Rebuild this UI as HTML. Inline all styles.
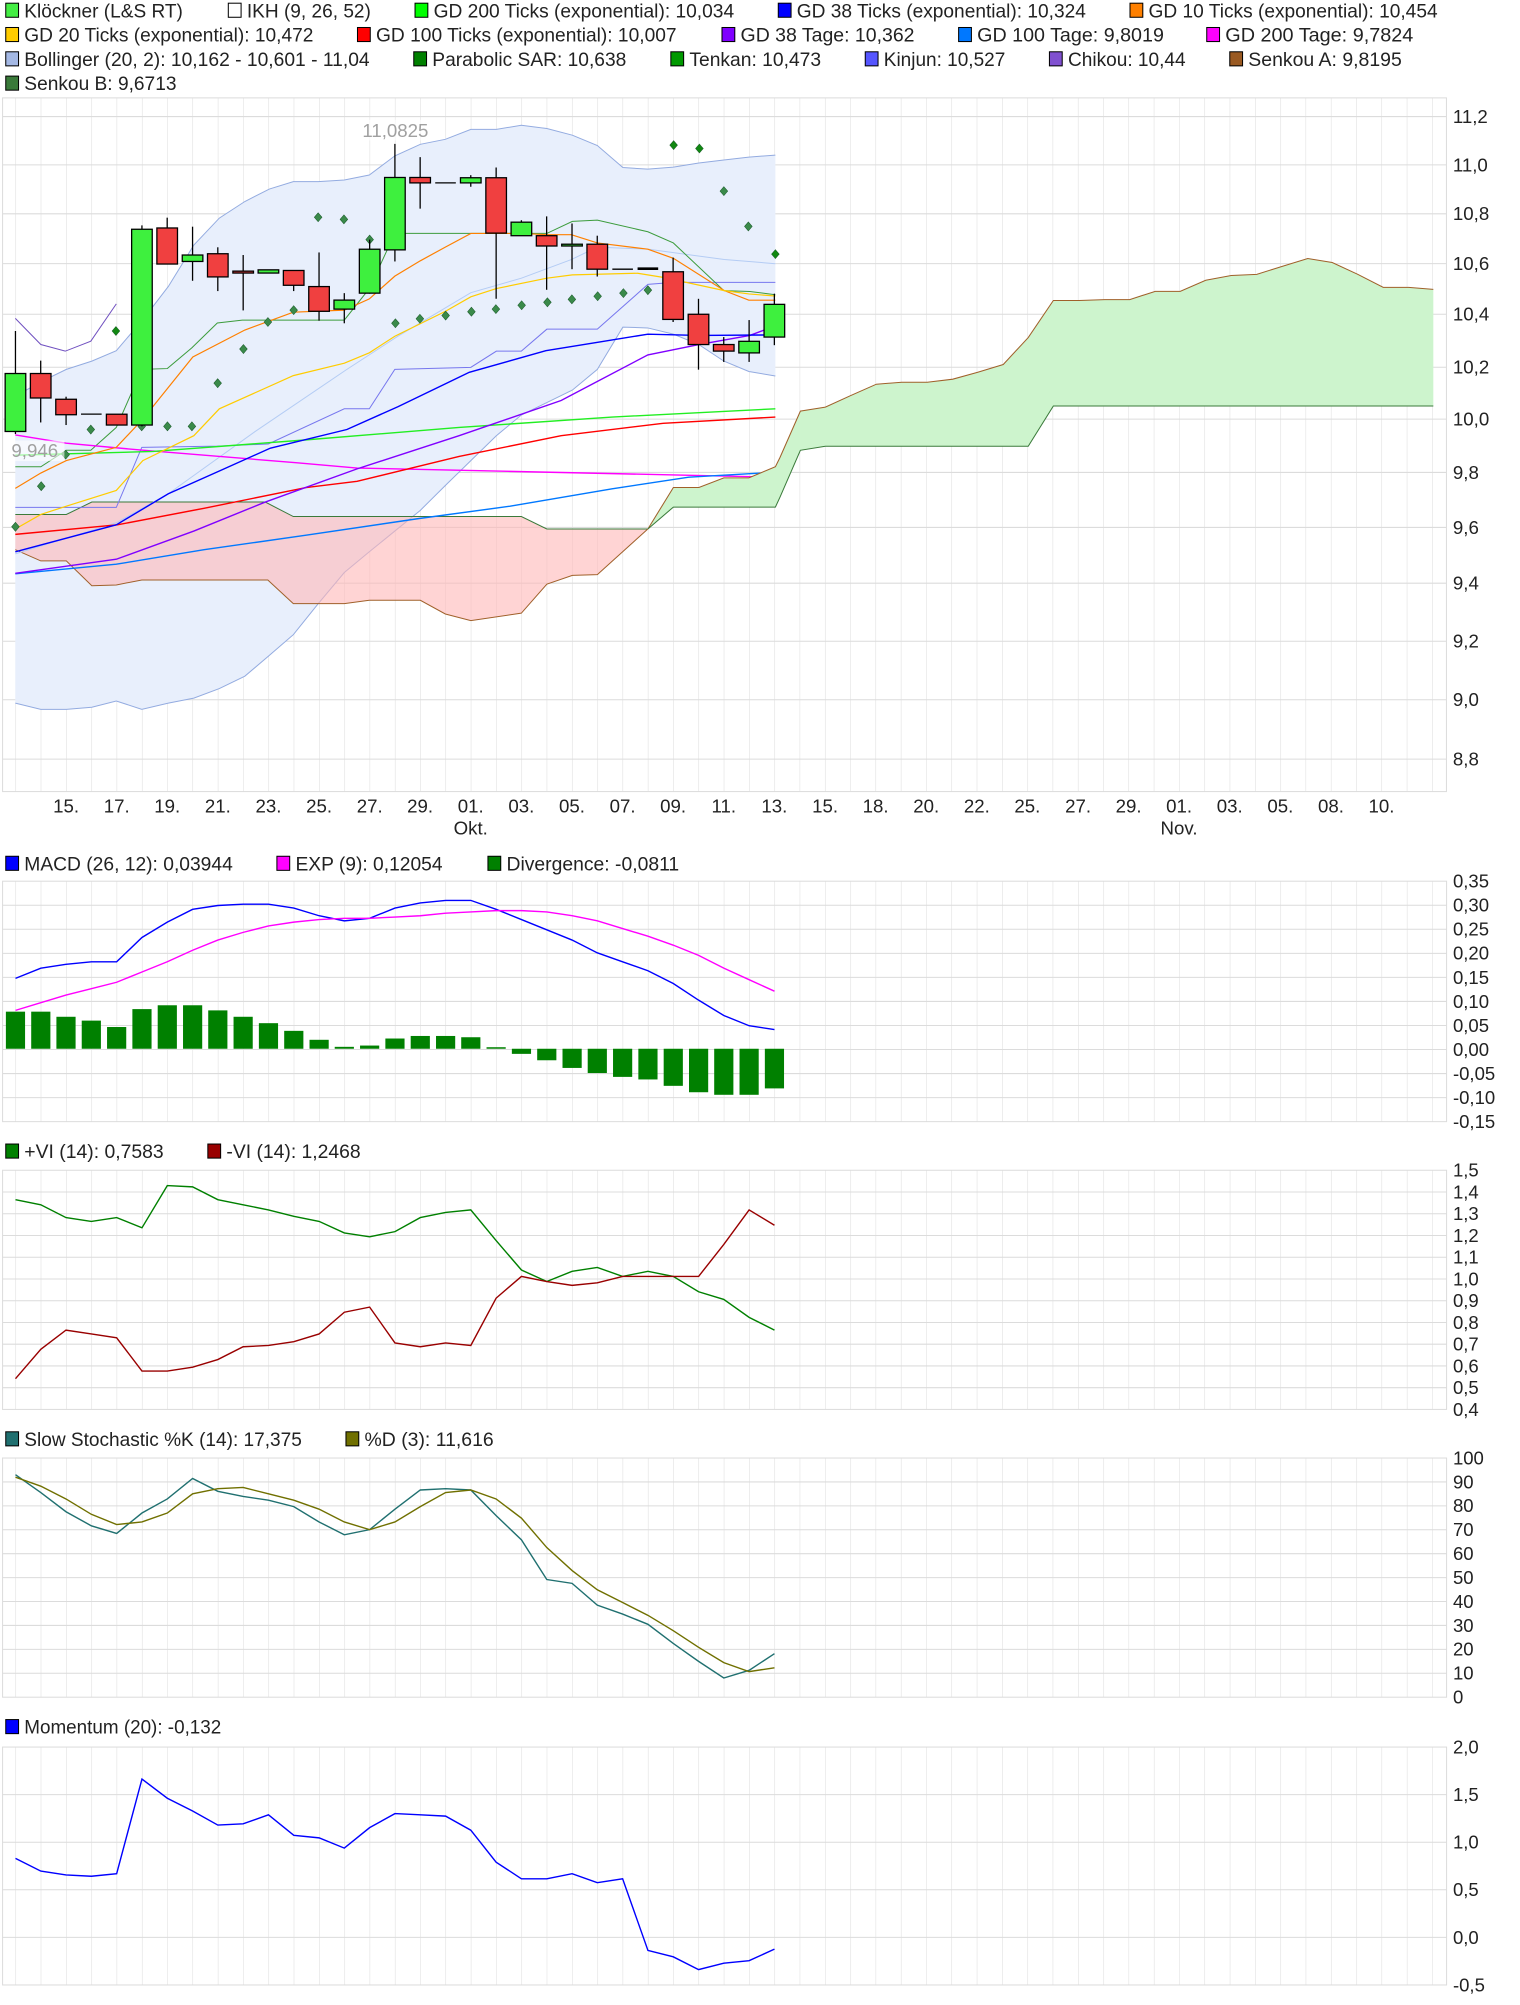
<!DOCTYPE html>
<html><head><meta charset="utf-8"><style>
html,body{margin:0;padding:0;background:#fff;}
svg{display:block;}
text{font-family:"Liberation Sans",sans-serif;fill:#222;}
.lg{font-size:15px;}
.ax{font-size:14.5px;}
</style></head><body>
<svg width="1520" height="2005" viewBox="0 0 1180.1 1556.7" preserveAspectRatio="none" xmlns="http://www.w3.org/2000/svg">
<defs>
<pattern id="vg" x="12" y="0" width="19.64" height="10" patternUnits="userSpaceOnUse"><rect x="-0.4" y="0" width="0.8" height="10" fill="#dcdcdc"/></pattern>
<pattern id="vg2" x="12.08" y="0" width="19.78" height="10" patternUnits="userSpaceOnUse"><rect x="-0.4" y="0" width="0.8" height="10" fill="#dcdcdc"/></pattern>
</defs>
<rect width="1180.1" height="1556.7" fill="#fff"/>

<rect x="2" y="76" width="1121" height="538.6" fill="none" stroke="#dcdcdc" stroke-width="0.8"/>
<rect x="11" y="76" width="1102" height="538.6" fill="url(#vg)"/>
<g stroke="#dcdcdc" stroke-width="0.8">
<line x1="2" x2="1123" y1="90.5" y2="90.5"/><line x1="2" x2="1123" y1="128" y2="128"/><line x1="2" x2="1123" y1="166" y2="166"/>
<line x1="2" x2="1123" y1="204.7" y2="204.7"/><line x1="2" x2="1123" y1="244" y2="244"/><line x1="2" x2="1123" y1="285.1" y2="285.1"/>
<line x1="2" x2="1123" y1="325.4" y2="325.4"/><line x1="2" x2="1123" y1="366.8" y2="366.8"/><line x1="2" x2="1123" y1="409.5" y2="409.5"/>
<line x1="2" x2="1123" y1="452.8" y2="452.8"/><line x1="2" x2="1123" y1="497.9" y2="497.9"/><line x1="2" x2="1123" y1="543.3" y2="543.3"/>
<line x1="2" x2="1123" y1="589.4" y2="589.4"/>
</g>
<g class="ax">
<text x="1128" y="95.5">11,2</text><text x="1128" y="133">11,0</text><text x="1128" y="171">10,8</text><text x="1128" y="209.7">10,6</text>
<text x="1128" y="249">10,4</text><text x="1128" y="290.1">10,2</text><text x="1128" y="330.4">10,0</text><text x="1128" y="371.8">9,8</text>
<text x="1128" y="414.5">9,6</text><text x="1128" y="457.8">9,4</text><text x="1128" y="502.9">9,2</text><text x="1128" y="548.3">9,0</text><text x="1128" y="594.4">8,8</text>
</g>
<g class="ax" text-anchor="middle">
<text x="51.3" y="631">15.</text><text x="90.6" y="631">17.</text><text x="129.8" y="631">19.</text><text x="169.1" y="631">21.</text>
<text x="208.4" y="631">23.</text><text x="247.7" y="631">25.</text><text x="287" y="631">27.</text><text x="326.2" y="631">29.</text>
<text x="365.5" y="631">01.</text><text x="404.8" y="631">03.</text><text x="444.1" y="631">05.</text><text x="483.4" y="631">07.</text>
<text x="522.6" y="631">09.</text><text x="561.9" y="631">11.</text><text x="601.2" y="631">13.</text><text x="640.6" y="631">15.</text>
<text x="679.8" y="631">18.</text><text x="719.1" y="631">20.</text><text x="758.4" y="631">22.</text><text x="797.6" y="631">25.</text>
<text x="837" y="631">27.</text><text x="876.2" y="631">29.</text><text x="915.4" y="631">01.</text><text x="954.7" y="631">03.</text>
<text x="994" y="631">05.</text><text x="1033.3" y="631">08.</text><text x="1072.6" y="631">10.</text>
<text x="365.5" y="648">Okt.</text><text x="915.4" y="648">Nov.</text>
</g>

<g transform="translate(0 77.6) scale(0.39604 0.32185)">
<polygon points="30,715 80,680 130,650 180,630 228,605 280,530 330,450 380,350 430,285 480,245 528,215 575,197 624,197 675,193 724,181 774,135 824,107 873,95 923,71 973,71 1022,61 1072,69 1122,85 1171,110 1221,163 1270,167 1320,162 1370,152 1419,145 1468,138 1520,133 1520,666 1468,655 1419,630 1370,590 1320,565 1270,550 1221,548 1171,650 1122,700 1072,730 1022,760 973,810 923,870 873,930 824,990 774,1040 724,1090 675,1140 624,1215 575,1290 528,1340 480,1390 430,1420 380,1443 330,1455 278,1470 228,1450 180,1465 130,1470 80,1470 30,1455" fill="#e8effc" stroke="none"/>
<polyline points="30,715 80,680 130,650 180,630 228,605 280,530 330,450 380,350 430,285 480,245 528,215 575,197 624,197 675,193 724,181 774,135 824,107 873,95 923,71 973,71 1022,61 1072,69 1122,85 1171,110 1221,163 1270,167 1320,162 1370,152 1419,145 1468,138 1520,133" fill="none" stroke="#93abe0" stroke-width="1" vector-effect="non-scaling-stroke"/>
<polyline points="30,1455 80,1470 130,1470 180,1465 228,1450 278,1470 330,1455 380,1443 430,1420 480,1390 528,1340 575,1290 624,1215 675,1140 724,1090 774,1040 824,990 873,930 923,870 973,810 1022,760 1072,730 1122,700 1171,650 1221,548 1270,550 1320,565 1370,590 1419,630 1468,655 1520,666" fill="none" stroke="#93abe0" stroke-width="1" vector-effect="non-scaling-stroke"/>
<polygon points="30,1000 130,1000 180,970 520,970 575,1005 1022,1005 1072,1035 1270,1035 1171,1145 1122,1147 1072,1168 1022,1238 923,1256 873,1240 824,1207 724,1207 675,1215 575,1215 525,1158 278,1158 228,1170 180,1172 130,1112 80,1112 30,1085" fill="#ffb8b8" fill-opacity="0.6"/>
<polyline points="30,1000 130,1000 180,970 520,970 575,1005 1022,1005 1072,1035 1270,1035" fill="none" stroke="#3a7a3a" stroke-width="1" vector-effect="non-scaling-stroke"/>
<polyline points="30,1085 80,1112 130,1112 180,1172 228,1170 278,1158 525,1158 575,1215 675,1215 724,1207 824,1207 873,1240 923,1256 1022,1238 1072,1168 1122,1147 1171,1145 1270,1035" fill="none" stroke="#a0602a" stroke-width="1" vector-effect="non-scaling-stroke"/>
<polyline points="30,1095 228,1020 330,950 500,800 680,650 780,570 923,465 1022,430 1120,385 1171,355 1270,360 1420,385 1520,395" fill="none" stroke="#b4ccf4" stroke-width="1" vector-effect="non-scaling-stroke"/>
<polyline points="30,983 228,983 278,838 426,835 526,830 675,745 724,745 774,650 923,645 973,606 1022,606 1072,553 1171,553 1270,445 1320,440 1520,440" fill="none" stroke="#7777ee" stroke-width="1" vector-effect="non-scaling-stroke"/>
<polyline points="30,885 80,885 130,845 178,845 228,790 278,650 328,648 376,598 426,538 475,531 675,531 724,455 774,322 973,322 1072,322 1122,293 1171,290 1270,318 1320,345 1419,460 1470,462 1520,470" fill="none" stroke="#3c9c3c" stroke-width="1" vector-effect="non-scaling-stroke"/>
<polyline points="30,527 80,590 128,606 178,582 228,492" fill="none" stroke="#7050c0" stroke-width="1" vector-effect="non-scaling-stroke"/>
<polyline points="30,808 130,828 280,845 580,875 700,888 1000,896 1520,910" fill="none" stroke="#ff00ff" stroke-width="1.4" vector-effect="non-scaling-stroke"/>
<polyline points="30,857 300,848 600,820 900,790 1200,765 1520,745" fill="none" stroke="#22ee22" stroke-width="1.4" vector-effect="non-scaling-stroke"/>
<polyline points="30,1048 230,1025 400,985 600,935 700,920 900,860 1100,810 1300,780 1520,765" fill="none" stroke="#ff0000" stroke-width="1.4" vector-effect="non-scaling-stroke"/>
<polyline points="30,1143 228,1120 400,1085 600,1050 820,1010 1000,980 1200,938 1350,910 1520,898" fill="none" stroke="#0078ff" stroke-width="1.4" vector-effect="non-scaling-stroke"/>
<polyline points="30,1142 228,1108 380,1040 520,970 700,890 900,810 1100,725 1270,615 1370,590 1470,568 1520,545" fill="none" stroke="#8000ff" stroke-width="1.4" vector-effect="non-scaling-stroke"/>
<polyline points="30,1090 228,1025 330,950 430,895 530,840 680,795 780,740 920,657 1070,605 1170,585 1270,565 1370,568 1500,567 1520,560" fill="none" stroke="#0000ff" stroke-width="1.4" vector-effect="non-scaling-stroke"/>
<polyline points="30,937 80,900 130,870 228,838 280,770 378,620 480,555 575,512 675,507 724,480 774,425 824,388 873,355 923,322 1022,322 1072,325 1120,325 1171,345 1270,360 1320,382 1420,460 1468,483 1520,483" fill="none" stroke="#ff8000" stroke-width="1.2" vector-effect="non-scaling-stroke"/>
<polyline points="30,1035 80,1000 130,980 228,942 280,870 380,810 430,745 575,665 675,635 724,610 774,570 873,510 923,475 973,455 1072,430 1122,422 1250,418 1300,428 1420,460 1468,468 1520,473" fill="none" stroke="#ffcc00" stroke-width="1.2" vector-effect="non-scaling-stroke"/>
</g>

<polygon points="503,410.7 522.8,378.5 542.6,378.5 562,371 581.4,371 602,362.4 605.6,355.1 621.4,319.2 640.8,316.1 660.9,306.9 680.4,298.3 700.1,296.8 719.9,296.8 739.7,294.4 758.8,289.1 778.9,283 798.3,262.1 817.8,233.3 837.9,233.3 857.7,232.6 877.1,232.6 896.9,226.2 916.3,226.2 936.1,217.6 955.9,213.9 975.7,213 995.5,206.8 1015.3,200.7 1034.3,203.8 1054.1,213 1073.9,223.1 1093.7,223.1 1112.8,224.7 1112.8,315.2 817.8,315.2 798.3,346.5 640.8,346.5 621.4,349.6 605.6,385.9 602,393.7 522.8,393.7" fill="#cdf4cd"/>
<polyline points="503,410.7 522.8,378.5 542.6,378.5 562,371 581.4,371 602,362.4 605.6,355.1 621.4,319.2 640.8,316.1 660.9,306.9 680.4,298.3 700.1,296.8 719.9,296.8 739.7,294.4 758.8,289.1 778.9,283 798.3,262.1 817.8,233.3 837.9,233.3 857.7,232.6 877.1,232.6 896.9,226.2 916.3,226.2 936.1,217.6 955.9,213.9 975.7,213 995.5,206.8 1015.3,200.7 1034.3,203.8 1054.1,213 1073.9,223.1 1093.7,223.1 1112.8,224.7" fill="none" stroke="#a0602a" stroke-width="0.8"/>
<polyline points="503,410.7 522.8,393.7 602,393.7 605.6,385.9 621.4,349.6 640.8,346.5 798.3,346.5 817.8,315.2 1112.8,315.2" fill="none" stroke="#3a7a3a" stroke-width="0.8"/>

<g fill="#3a8a4a" stroke="#1a5a2a" stroke-width="0.4">
<path d="M12 405.5l3 3.5l-3 3.5l-3-3.5z"/><path d="M32 374l3 3.5l-3 3.5l-3-3.5z"/><path d="M51 349.5l3 3.5l-3 3.5l-3-3.5z"/>
<path d="M70.5 330l3 3.5l-3 3.5l-3-3.5z"/><path d="M90 253.5l3 3.5l-3 3.5l-3-3.5z" fill="#118811"/><path d="M110 327.5l3 3.5l-3 3.5l-3-3.5z"/>
<path d="M130 327.5l3 3.5l-3 3.5l-3-3.5z"/><path d="M149 327.5l3 3.5l-3 3.5l-3-3.5z"/><path d="M169 294l3 3.5l-3 3.5l-3-3.5z"/>
<path d="M189 267.5l3 3.5l-3 3.5l-3-3.5z"/><path d="M208 246.5l3 3.5l-3 3.5l-3-3.5z"/><path d="M228 237.3l3 3.5l-3 3.5l-3-3.5z"/>
<path d="M247 165.2l3 3.5l-3 3.5l-3-3.5z"/><path d="M267 166.8l3 3.5l-3 3.5l-3-3.5z"/><path d="M287 182.5l3 3.5l-3 3.5l-3-3.5z"/>
<path d="M307 247.5l3 3.5l-3 3.5l-3-3.5z"/><path d="M326 244l3 3.5l-3 3.5l-3-3.5z"/><path d="M346 241.5l3 3.5l-3 3.5l-3-3.5z"/>
<path d="M366 238.5l3 3.5l-3 3.5l-3-3.5z"/><path d="M385 236.5l3 3.5l-3 3.5l-3-3.5z"/><path d="M405 233.5l3 3.5l-3 3.5l-3-3.5z"/>
<path d="M425 231.2l3 3.5l-3 3.5l-3-3.5z"/><path d="M444 228.9l3 3.5l-3 3.5l-3-3.5z"/><path d="M464 226.5l3 3.5l-3 3.5l-3-3.5z"/>
<path d="M484 224.1l3 3.5l-3 3.5l-3-3.5z"/><path d="M503 221.8l3 3.5l-3 3.5l-3-3.5z"/><path d="M523 109.2l3 3.5l-3 3.5l-3-3.5z" fill="#118811"/>
<path d="M543 111.8l3 3.5l-3 3.5l-3-3.5z" fill="#118811"/><path d="M562 144.9l3 3.5l-3 3.5l-3-3.5z"/><path d="M581 172.3l3 3.5l-3 3.5l-3-3.5z"/>
<path d="M602 193.8l3 3.5l-3 3.5l-3-3.5z" fill="#118811"/>
</g>

<g stroke="#000" stroke-width="1">
<line x1="12" y1="257" x2="12" y2="337"/><rect x="4" y="290" width="16" height="45" fill="#3ef03e"/>
<line x1="31.6" y1="280" x2="31.6" y2="328"/><rect x="23.6" y="290" width="16" height="19" fill="#f04040"/>
<line x1="51.3" y1="308" x2="51.3" y2="330"/><rect x="43.3" y="310" width="16" height="12" fill="#f04040"/>
<line x1="62.9" y1="321.5" x2="78.9" y2="321.5"/>
<rect x="82.6" y="321.6" width="16" height="8.4" fill="#f04040"/>
<line x1="110.2" y1="175" x2="110.2" y2="331"/><rect x="102.2" y="178" width="16" height="152" fill="#3ef03e"/>
<line x1="129.8" y1="169" x2="129.8" y2="205"/><rect x="121.8" y="177" width="16" height="28" fill="#f04040"/>
<line x1="149.5" y1="176" x2="149.5" y2="218"/><rect x="141.5" y="198" width="16" height="5" fill="#3ef03e"/>
<line x1="169.1" y1="192" x2="169.1" y2="226"/><rect x="161.1" y="197" width="16" height="18" fill="#f04040"/>
<line x1="188.8" y1="198" x2="188.8" y2="241"/><rect x="180.8" y="210.5" width="16" height="1.5" fill="#f04040"/>
<rect x="200.4" y="209.5" width="16" height="2.5" fill="#3ef03e"/>
<line x1="228" y1="210" x2="228" y2="226"/><rect x="220" y="210" width="16" height="11.5" fill="#f04040"/>
<line x1="247.7" y1="196" x2="247.7" y2="249"/><rect x="239.7" y="222.5" width="16" height="19.2" fill="#f04040"/>
<line x1="267.3" y1="227.6" x2="267.3" y2="251"/><rect x="259.3" y="233" width="16" height="7" fill="#3ef03e"/>
<line x1="287" y1="186" x2="287" y2="228"/><rect x="279" y="193.5" width="16" height="34.1" fill="#3ef03e"/>
<line x1="306.6" y1="111.7" x2="306.6" y2="203"/><rect x="298.6" y="137.8" width="16" height="56.2" fill="#3ef03e"/>
<line x1="326.2" y1="122" x2="326.2" y2="162"/><rect x="318.2" y="137.8" width="16" height="4.2" fill="#f04040"/>
<line x1="337.9" y1="142" x2="353.9" y2="142"/>
<line x1="365.5" y1="136" x2="365.5" y2="145"/><rect x="357.5" y="138" width="16" height="4" fill="#3ef03e"/>
<line x1="385.2" y1="130" x2="385.2" y2="232"/><rect x="377.2" y="138" width="16" height="43" fill="#f04040"/>
<line x1="404.8" y1="171" x2="404.8" y2="183"/><rect x="396.8" y="172.5" width="16" height="10.5" fill="#3ef03e"/>
<line x1="424.4" y1="168" x2="424.4" y2="225"/><rect x="416.4" y="183" width="16" height="8" fill="#f04040"/>
<line x1="444.1" y1="173.5" x2="444.1" y2="209"/><rect x="436.1" y="189.6" width="16" height="1.4" fill="#3ef03e"/>
<line x1="463.7" y1="183" x2="463.7" y2="214.7"/><rect x="455.7" y="189.6" width="16" height="19.4" fill="#f04040"/>
<line x1="475.4" y1="209" x2="491.4" y2="209"/>
<line x1="495" y1="208.6" x2="511" y2="208.6" stroke-width="2"/>
<line x1="522.6" y1="200" x2="522.6" y2="250"/><rect x="514.6" y="211" width="16" height="37" fill="#f04040"/>
<line x1="542.3" y1="232" x2="542.3" y2="287"/><rect x="534.3" y="244" width="16" height="23.5" fill="#f04040"/>
<line x1="561.9" y1="261.7" x2="561.9" y2="281"/><rect x="553.9" y="267.5" width="16" height="5.1" fill="#f04040"/>
<line x1="581.6" y1="248.5" x2="581.6" y2="281"/><rect x="573.6" y="265" width="16" height="9" fill="#3ef03e"/>
<line x1="601.2" y1="228" x2="601.2" y2="268"/><rect x="593.2" y="236.3" width="16" height="25.4" fill="#3ef03e"/>
</g>
<rect x="277" y="93" width="60" height="16" fill="#fff" fill-opacity="0.6"/>
<text x="307" y="106.5" text-anchor="middle" style="font-size:14.5px;fill:#a0a0a0">11,0825</text>
<rect x="4" y="342" width="46" height="16" fill="#fff" fill-opacity="0.6"/>
<text x="27" y="355" text-anchor="middle" style="font-size:14.5px;fill:#a0a0a0">9,946</text>

<g transform="scale(0.993)">
<g class="lg" stroke="#000" stroke-width="0.8">
<rect x="4.5" y="2.5" width="10" height="11" fill="#44ee44"/><rect x="178.5" y="2.5" width="10" height="11" fill="#fff"/>
<rect x="324.5" y="2.5" width="10" height="11" fill="#00ff00"/><rect x="608.5" y="2.5" width="10" height="11" fill="#0000ff"/>
<rect x="883.5" y="2.5" width="10" height="11" fill="#ff8000"/>
<rect x="4.5" y="21.5" width="10" height="11" fill="#ffcc00"/><rect x="279.5" y="21.5" width="10" height="11" fill="#ff0000"/>
<rect x="564.5" y="21.5" width="10" height="11" fill="#8000ff"/><rect x="749.5" y="21.5" width="10" height="11" fill="#0078ff"/>
<rect x="943.5" y="21.5" width="10" height="11" fill="#ff00ff"/>
<rect x="4.5" y="40.5" width="10" height="11" fill="#a4b8e4"/><rect x="323.5" y="40.5" width="10" height="11" fill="#008000"/>
<rect x="524.5" y="40.5" width="10" height="11" fill="#009900"/><rect x="676.5" y="40.5" width="10" height="11" fill="#5555ff"/>
<rect x="820.5" y="40.5" width="10" height="11" fill="#8050d0"/><rect x="961.5" y="40.5" width="10" height="11" fill="#9a5a22"/>
<rect x="4.5" y="59.5" width="10" height="11" fill="#3a7a3a"/>
<rect x="4.5" y="669.5" width="10" height="11" fill="#0000ff"/><rect x="216.5" y="669.5" width="10" height="11" fill="#ff00ff"/>
<rect x="381.5" y="669.5" width="10" height="11" fill="#008000"/>
<rect x="4.5" y="894.5" width="10" height="11" fill="#008000"/><rect x="162.5" y="894.5" width="10" height="11" fill="#990000"/>
<rect x="4.5" y="1119.5" width="10" height="11" fill="#207070"/><rect x="270.5" y="1119.5" width="10" height="11" fill="#707000"/>
<rect x="4.5" y="1344.5" width="10" height="11" fill="#0000ff"/>
</g>
<g class="lg">
<text x="19" y="13.5" textLength="124" lengthAdjust="spacingAndGlyphs">Klöckner (L&amp;S RT)</text>
<text x="193" y="13.5" textLength="97" lengthAdjust="spacingAndGlyphs">IKH (9, 26, 52)</text>
<text x="339" y="13.5" textLength="235" lengthAdjust="spacingAndGlyphs">GD 200 Ticks (exponential): 10,034</text>
<text x="623" y="13.5" textLength="226" lengthAdjust="spacingAndGlyphs">GD 38 Ticks (exponential): 10,324</text>
<text x="898" y="13.5" textLength="226" lengthAdjust="spacingAndGlyphs">GD 10 Ticks (exponential): 10,454</text>
<text x="19" y="32.5" textLength="226" lengthAdjust="spacingAndGlyphs">GD 20 Ticks (exponential): 10,472</text>
<text x="294" y="32.5" textLength="235" lengthAdjust="spacingAndGlyphs">GD 100 Ticks (exponential): 10,007</text>
<text x="579" y="32.5" textLength="136" lengthAdjust="spacingAndGlyphs">GD 38 Tage: 10,362</text>
<text x="764" y="32.5" textLength="146" lengthAdjust="spacingAndGlyphs">GD 100 Tage: 9,8019</text>
<text x="958" y="32.5" textLength="147" lengthAdjust="spacingAndGlyphs">GD 200 Tage: 9,7824</text>
<text x="19" y="51.5" textLength="270" lengthAdjust="spacingAndGlyphs">Bollinger (20, 2): 10,162 - 10,601 - 11,04</text>
<text x="338" y="51.5">Parabolic SAR: 10,638</text>
<text x="539" y="51.5" textLength="103" lengthAdjust="spacingAndGlyphs">Tenkan: 10,473</text>
<text x="691" y="51.5" textLength="95" lengthAdjust="spacingAndGlyphs">Kinjun: 10,527</text>
<text x="835" y="51.5" textLength="92" lengthAdjust="spacingAndGlyphs">Chikou: 10,44</text>
<text x="976" y="51.5" textLength="120" lengthAdjust="spacingAndGlyphs">Senkou A: 9,8195</text>
<text x="19" y="70.5" textLength="119" lengthAdjust="spacingAndGlyphs">Senkou B: 9,6713</text>
<text x="19" y="680.5" textLength="163" lengthAdjust="spacingAndGlyphs">MACD (26, 12): 0,03944</text>
<text x="231" y="680.5" textLength="115" lengthAdjust="spacingAndGlyphs">EXP (9): 0,12054</text>
<text x="396" y="680.5" textLength="135" lengthAdjust="spacingAndGlyphs">Divergence: -0,0811</text>
<text x="19" y="905.5" textLength="109" lengthAdjust="spacingAndGlyphs">+VI (14): 0,7583</text>
<text x="177" y="905.5" textLength="105" lengthAdjust="spacingAndGlyphs">-VI (14): 1,2468</text>
<text x="19" y="1130.5" textLength="217" lengthAdjust="spacingAndGlyphs">Slow Stochastic %K (14): 17,375</text>
<text x="285" y="1130.5" textLength="101" lengthAdjust="spacingAndGlyphs">%D (3): 11,616</text>
<text x="19" y="1355.5" textLength="154" lengthAdjust="spacingAndGlyphs">Momentum (20): -0,132</text>
</g>

<g fill="none" stroke="#dcdcdc" stroke-width="0.8">
<rect x="2" y="689" width="1129" height="188"/>
<rect x="2" y="915" width="1129" height="187"/>
<rect x="2" y="1140" width="1129" height="187"/>
<rect x="2" y="1366" width="1129" height="186"/>
</g>
<rect x="11" y="689" width="1110" height="188" fill="url(#vg2)"/>
<rect x="11" y="915" width="1110" height="187" fill="url(#vg2)"/>
<rect x="11" y="1140" width="1110" height="187" fill="url(#vg2)"/>
<rect x="11" y="1366" width="1110" height="186" fill="url(#vg2)"/>
<g stroke="#dcdcdc" stroke-width="0.8">
<line x1="2" x2="1131" y1="707.8" y2="707.8"/><line x1="2" x2="1131" y1="726.6" y2="726.6"/><line x1="2" x2="1131" y1="745.4" y2="745.4"/>
<line x1="2" x2="1131" y1="764.2" y2="764.2"/><line x1="2" x2="1131" y1="783" y2="783"/><line x1="2" x2="1131" y1="801.8" y2="801.8"/>
<line x1="2" x2="1131" y1="820.6" y2="820.6"/><line x1="2" x2="1131" y1="839.4" y2="839.4"/><line x1="2" x2="1131" y1="858.2" y2="858.2"/>
<line x1="2" x2="1131" y1="932" y2="932"/><line x1="2" x2="1131" y1="949" y2="949"/><line x1="2" x2="1131" y1="966" y2="966"/>
<line x1="2" x2="1131" y1="983" y2="983"/><line x1="2" x2="1131" y1="1000" y2="1000"/><line x1="2" x2="1131" y1="1017" y2="1017"/>
<line x1="2" x2="1131" y1="1034" y2="1034"/><line x1="2" x2="1131" y1="1051" y2="1051"/><line x1="2" x2="1131" y1="1068" y2="1068"/>
<line x1="2" x2="1131" y1="1085" y2="1085"/>
<line x1="2" x2="1131" y1="1158.7" y2="1158.7"/><line x1="2" x2="1131" y1="1177.4" y2="1177.4"/><line x1="2" x2="1131" y1="1196.1" y2="1196.1"/>
<line x1="2" x2="1131" y1="1214.8" y2="1214.8"/><line x1="2" x2="1131" y1="1233.5" y2="1233.5"/><line x1="2" x2="1131" y1="1252.2" y2="1252.2"/>
<line x1="2" x2="1131" y1="1270.9" y2="1270.9"/><line x1="2" x2="1131" y1="1289.6" y2="1289.6"/><line x1="2" x2="1131" y1="1308.3" y2="1308.3"/>
<line x1="2" x2="1131" y1="1403.2" y2="1403.2"/><line x1="2" x2="1131" y1="1440.4" y2="1440.4"/><line x1="2" x2="1131" y1="1477.6" y2="1477.6"/>
<line x1="2" x2="1131" y1="1514.8" y2="1514.8"/>
</g>
<g class="ax">
<text x="1136" y="694">0,35</text><text x="1136" y="712.8">0,30</text><text x="1136" y="731.6">0,25</text><text x="1136" y="750.4">0,20</text>
<text x="1136" y="769.2">0,15</text><text x="1136" y="788">0,10</text><text x="1136" y="806.8">0,05</text><text x="1136" y="825.6">0,00</text>
<text x="1136" y="844.4">-0,05</text><text x="1136" y="863.2">-0,10</text><text x="1136" y="882">-0,15</text>
<text x="1136" y="920">1,5</text><text x="1136" y="937">1,4</text><text x="1136" y="954">1,3</text><text x="1136" y="971">1,2</text>
<text x="1136" y="988">1,1</text><text x="1136" y="1005">1,0</text><text x="1136" y="1022">0,9</text><text x="1136" y="1039">0,8</text>
<text x="1136" y="1056">0,7</text><text x="1136" y="1073">0,6</text><text x="1136" y="1090">0,5</text><text x="1136" y="1107">0,4</text>
<text x="1136" y="1145">100</text><text x="1136" y="1163.7">90</text><text x="1136" y="1182.4">80</text><text x="1136" y="1201.1">70</text>
<text x="1136" y="1219.8">60</text><text x="1136" y="1238.5">50</text><text x="1136" y="1257.2">40</text><text x="1136" y="1275.9">30</text>
<text x="1136" y="1294.6">20</text><text x="1136" y="1313.3">10</text><text x="1136" y="1332">0</text>
<text x="1136" y="1371">2,0</text><text x="1136" y="1408.2">1,5</text><text x="1136" y="1445.4">1,0</text><text x="1136" y="1482.6">0,5</text>
<text x="1136" y="1519.8">0,0</text><text x="1136" y="1557">-0,5</text>
</g>

<g fill="#008000">
<rect x="4.6" y="791" width="15" height="29"/><rect x="24.4" y="791" width="15" height="29"/><rect x="44.1" y="795" width="15" height="25"/>
<rect x="63.9" y="798" width="15" height="22"/><rect x="83.7" y="803" width="15" height="17"/><rect x="103.5" y="789" width="15" height="31"/>
<rect x="123.3" y="786" width="15" height="34"/><rect x="143.1" y="786" width="15" height="34"/><rect x="162.8" y="790" width="15" height="30"/>
<rect x="182.6" y="795" width="15" height="25"/><rect x="202.4" y="800" width="15" height="20"/><rect x="222.2" y="806" width="15" height="14"/>
<rect x="242" y="813" width="15" height="7"/><rect x="261.7" y="818.5" width="15" height="1.5"/><rect x="281.5" y="817.5" width="15" height="2.5"/>
<rect x="301.3" y="812" width="15" height="8"/><rect x="321.1" y="810" width="15" height="10"/><rect x="340.9" y="810" width="15" height="10"/>
<rect x="360.6" y="811" width="15" height="9"/><rect x="380.4" y="818.8" width="15" height="1.2"/><rect x="400.2" y="820" width="15" height="4"/>
<rect x="420" y="820" width="15" height="9"/><rect x="439.8" y="820" width="15" height="15"/><rect x="459.5" y="820" width="15" height="19"/>
<rect x="479.3" y="820" width="15" height="22"/><rect x="499.1" y="820" width="15" height="24"/><rect x="518.9" y="820" width="15" height="29"/>
<rect x="538.7" y="820" width="15" height="34"/><rect x="558.4" y="820" width="15" height="36"/><rect x="578.2" y="820" width="15" height="36"/>
<rect x="598" y="820" width="15" height="31"/>
</g>
<g fill="none" stroke-width="1.1">
<polyline stroke="#0000ff" points="12.1,765 31.9,757 51.6,754 71.4,752 91.2,752 111,733 130.8,721 150.6,711 170.3,708 190.1,707 209.9,707 229.7,710 249.5,716 269.2,720 289,718 308.8,710 328.6,706 348.4,704 368.1,704 387.9,711 407.7,719 427.5,727 447.3,735 467,745 486.8,752 506.6,759 526.4,769 546.2,782 565.9,794 585.7,802 605.5,805"/>
<polyline stroke="#ff00ff" points="12.1,790 31.9,784 51.6,778 71.4,773 91.2,768 111,760 130.8,752 150.6,743 170.3,735 190.1,729 209.9,724 229.7,721 249.5,719 269.2,718 289,718 308.8,717 328.6,716 348.4,714 368.1,713 387.9,712 407.7,712 427.5,713 447.3,716 467,720 486.8,726 506.6,732 526.4,739 546.2,747 565.9,757 585.7,766 605.5,775"/>
<polyline stroke="#008000" points="12.1,938 31.9,942 51.6,952 71.4,955 91.2,952 111,960 130.8,927 150.6,928 170.3,938 190.1,942 209.9,946 229.7,951 249.5,955 269.2,964 289,967 308.8,963 328.6,952 348.4,948 368.1,946 387.9,970 407.7,993 427.5,1002 447.3,994 467,991 486.8,998 506.6,994 526.4,998 546.2,1010 565.9,1016 585.7,1030 605.5,1040"/>
<polyline stroke="#990000" points="12.1,1078 31.9,1055 51.6,1040 71.4,1043 91.2,1046 111,1072 130.8,1072 150.6,1069 170.3,1063 190.1,1053 209.9,1052 229.7,1049 249.5,1043 269.2,1026 289,1022 308.8,1050 328.6,1053 348.4,1050 368.1,1052 387.9,1015 407.7,998 427.5,1002 447.3,1005 467,1003 486.8,998 506.6,998 526.4,998 546.2,998 565.9,973 585.7,946 605.5,958"/>
<polyline stroke="#207070" points="12.1,1153 31.9,1167 51.6,1182 71.4,1193 91.2,1199 111,1183 130.8,1172 150.6,1156 170.3,1166 190.1,1170 209.9,1173 229.7,1178 249.5,1190 269.2,1200 289,1196 308.8,1180 328.6,1165 348.4,1164 368.1,1165 387.9,1185 407.7,1204 427.5,1235 447.3,1238 467,1255 486.8,1262 506.6,1270 526.4,1285 546.2,1299 565.9,1312 585.7,1306 605.5,1293"/>
<polyline stroke="#707000" points="12.1,1155 31.9,1162 51.6,1172 71.4,1184 91.2,1192 111,1190 130.8,1183 150.6,1168 170.3,1164 190.1,1163 209.9,1168 229.7,1173 249.5,1180 269.2,1190 289,1196 308.8,1190 328.6,1178 348.4,1167 368.1,1165 387.9,1172 407.7,1187 427.5,1210 447.3,1228 467,1243 486.8,1253 506.6,1263 526.4,1275 546.2,1288 565.9,1300 585.7,1307 605.5,1304"/>
<polyline stroke="#0000ff" points="12.1,1453 31.9,1463 51.6,1466 71.4,1467 91.2,1465 111,1391 130.8,1406 150.6,1416 170.3,1427 190.1,1426 209.9,1419 229.7,1435 249.5,1437 269.2,1445 289,1429 308.8,1418 328.6,1419 348.4,1420 368.1,1431 387.9,1456 407.7,1469 427.5,1469 447.3,1465 467,1472 486.8,1469 506.6,1525 526.4,1530 546.2,1540 565.9,1535 585.7,1533 605.5,1524"/>
</g>
</g>
</svg>
</body></html>
